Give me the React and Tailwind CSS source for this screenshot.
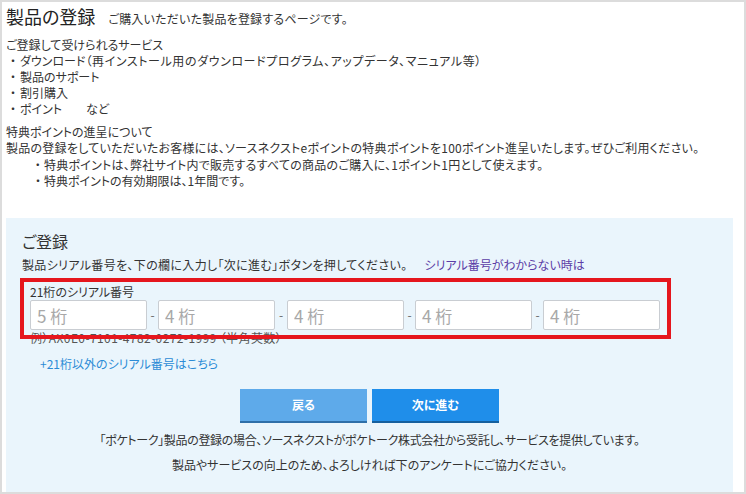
import React from 'react';

const font = "[font-family:'Noto_Sans_CJK_JP','Noto_Sans',sans-serif] [font-feature-settings:'palt']";

function Bullet({ w = 'w-[14px]' }) {
  return <span className={`inline-block ${w} text-center`}>・</span>;
}

function SerialInput({ placeholder }) {
  return (
    <input
      type="text"
      placeholder={placeholder}
      className="w-[117px] h-[30px] bg-white border border-[#c9cdd2] rounded-[2px] px-[6px] text-[17px] text-[#333] placeholder:text-[#a8a8a8] outline-none"
    />
  );
}

export default function App() {
  return (
    <div className={`${font} w-[746px] h-[494px] bg-white border-2 border-[#dcdcdc] text-[#333] overflow-hidden`}>
      <div className="pl-[4px] pr-[11px]">
        {/* header */}
        <div className="flex items-baseline h-[26px] pt-[2px]">
          <h1 className="text-[18px] leading-[24px] text-[#222]">製品の登録</h1>
          <span className="ml-[13px] text-[12px] tracking-[0.2px]">ご購入いただいた製品を登録するページです。</span>
        </div>

        {/* services */}
        <div className="mt-[9px] text-[12px] leading-[16px]">
          <p>ご登録して受けられるサービス</p>
          <p><Bullet />ダウンロード<span className="tracking-[0.6px]">（再インストール用のダウンロードプログラム、アップデータ、マニュアル等）</span></p>
          <p><Bullet />製品のサポート</p>
          <p><Bullet />割引購入</p>
          <p><Bullet />ポイント<span className="ml-[24px]">など</span></p>
        </div>

        {/* points */}
        <div className="mt-[7px] text-[12px] leading-[16.3px]">
          <p>特典ポイントの進呈について</p>
          <p className="tracking-[0.25px]">製品の登録をしていただいたお客様には、ソースネクストeポイントの特典ポイントを100ポイント進呈いたします。ぜひご利用ください。</p>
          <p className="pl-[26px] tracking-[0.25px]"><Bullet w="w-[12px]" />特典ポイントは、弊社サイト内で販売するすべての商品のご購入に、1ポイント1円として使えます。</p>
          <p className="pl-[26px]"><Bullet w="w-[12px]" />特典ポイントの有効期限は、1年間です。</p>
        </div>

        {/* registration panel */}
        <div className="relative mt-[29px] bg-[#eaf5fc] px-[16px] pt-[12px] pb-[21px]">
          <h2 className="text-[16px] leading-[22px] text-[#333]">ご登録</h2>
          <p className="mt-[5px] text-[12px] leading-[16px]">
            <span className="tracking-[0.35px]">製品シリアル番号を、下の欄に入力し「次に進む」ボタンを押してください。</span>
            <a href="#" className="ml-[17px] text-[#5b3da6]">シリアル番号がわからない時は</a>
          </p>

          <div className="ml-[8px] mt-[12px]">
            <p className="text-[12px] leading-[14px]">21桁のシリアル番号</p>
            <div className="mt-[1px] flex items-center">
              <SerialInput placeholder="5 桁" />
              <span className="w-[11px] text-center text-[12px] text-[#666]">-</span>
              <SerialInput placeholder="4 桁" />
              <span className="w-[12px] text-center text-[12px] text-[#666]">-</span>
              <SerialInput placeholder="4 桁" />
              <span className="w-[11px] text-center text-[12px] text-[#666]">-</span>
              <SerialInput placeholder="4 桁" />
              <span className="w-[11px] text-center text-[12px] text-[#666]">-</span>
              <SerialInput placeholder="4 桁" />
            </div>
            <p className="mt-[1px] text-[12px] leading-[14px] text-[#555] tracking-[0.4px]">例）AX0E0-7101-4782-0272-1999 （半角英数）</p>
          </div>

          <a href="#" className="block ml-[18px] mt-[11px] text-[12px] leading-[16px] text-[#2b8bd6]">+21桁以外のシリアル番号はこちら</a>

          <div className="mt-[17px] flex justify-center gap-[5px]">
            <button className="w-[127px] h-[34px] bg-[#5eaaea] border-b-2 border-[#2f6fa8] text-white text-[12px] font-bold">戻る</button>
            <button className="w-[127px] h-[34px] bg-[#1f8eea] border-b-2 border-[#16609e] text-white text-[12px] font-bold">次に進む</button>
          </div>

          <p className="mt-[9px] text-center text-[12px] leading-[16px] tracking-[-0.33px]">「ポケトーク」製品の登録の場合、ソースネクストがポケトーク株式会社から受託し、サービスを提供しています。</p>
          <p className="mt-[9px] text-center text-[12px] leading-[16px]">製品やサービスの向上のため、よろしければ下のアンケートにご協力ください。</p>

          {/* annotation highlight */}
          <div className="absolute left-[14px] top-[60px] w-[651px] h-[61px] border-4 border-[#e5161d] pointer-events-none" />
        </div>
      </div>
    </div>
  );
}
